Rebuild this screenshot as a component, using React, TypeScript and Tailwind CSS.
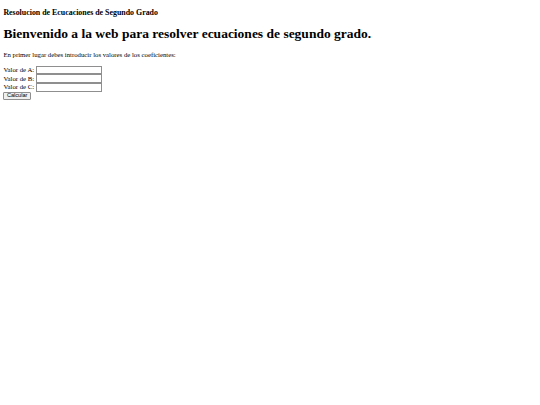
export default function App() {
  const rows = ["A", "B", "C"];
  return (
    <div className="min-h-[405px] w-[540px] bg-white px-[3.4px] text-black font-['Liberation_Serif',serif]">
      <h3 className="pt-[7.9px] text-[7.9px] font-bold leading-[9.1px]">
        Resolucion de Ecucaciones de Segundo Grado
      </h3>
      <h1 className="mt-[9.4px] text-[13.5px] font-bold leading-[15.5px]">
        Bienvenido a la web para resolver ecuaciones de segundo grado.
      </h1>
      <p className="mt-[9.6px] text-[6.75px] leading-[7.8px]">
        En primer lugar debes introducir los valores de los coeficientes:
      </p>
      <form className="mt-[6.3px] flex flex-col text-[6.75px] leading-[7.8px]">
        {rows.map((r) => (
          <div key={r} className="flex items-center h-[8.7px]">
            <label>Valor de {r}:</label>
            <input
              type="text"
              className="ml-[1.5px] h-[8.5px] w-[66px] border border-[#8f8f8f] bg-white outline-none"
            />
          </div>
        ))}
        <div className="flex">
          <button
            type="button"
            className="mt-[0.6px] h-[8px] px-[2.5px] rounded-[1px] border border-[#8f8f8f] bg-[#efefef] text-[5.6px] leading-none font-['Liberation_Sans',sans-serif]"
          >
            Calcular
          </button>
        </div>
      </form>
    </div>
  );
}
